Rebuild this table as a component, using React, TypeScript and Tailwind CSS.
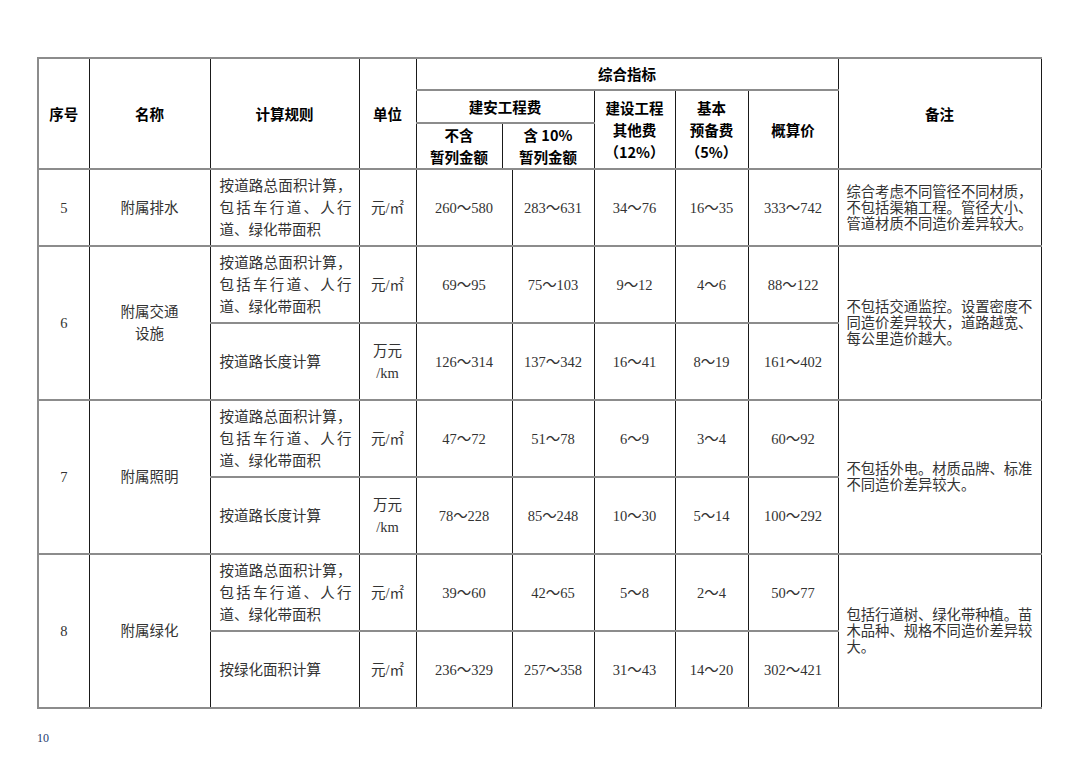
import React from "react";

const hb = "border-y-2 border-y-[#8c8c8c] border-x border-x-[#1a1a1a]";
const th = `${hb} text-center align-middle font-bold text-black p-0 leading-[22px]`;
const td = `${hb} text-center align-middle p-0 text-[#333] leading-[22px]`;

function Unit({ kind }: { kind: "m2" | "km" }) {
  if (kind === "m2") return <span>元/㎡</span>;
  return (
    <span>
      万元
      <br />/km
    </span>
  );
}

function RuleArea() {
  return (
    <div className="pl-[9px] pr-[7px] text-left">
      <div className="[text-align-last:justify] whitespace-nowrap">按道路总面积计算，</div>
      <div className="[text-align-last:justify] whitespace-nowrap">包括车行道、人行</div>
      <div className="whitespace-nowrap">道、绿化带面积</div>
    </div>
  );
}

function Remark({ lines }: { lines: string[] }) {
  return (
    <div className="pl-[8px] pr-[4px] text-left text-[14.3px] leading-[16px]">
      {lines.map((l, i) => (
        <div key={i} className="whitespace-nowrap">
          {l}
        </div>
      ))}
    </div>
  );
}

type Vals = [string, string, string, string, string];

function Nums({ v }: { v: Vals }) {
  return (
    <>
      <td className={td} colSpan={2}>
        {v[0]}
      </td>
      <td className={td}>{v[1]}</td>
      <td className={td}>{v[2]}</td>
      <td className={td}>{v[3]}</td>
      <td className={td}>{v[4]}</td>
    </>
  );
}

export default function App() {
  const groups: {
    no: string;
    name: React.ReactNode;
    remark: string[];
    rows: { rule: React.ReactNode; unit: "m2" | "km"; v: Vals }[];
  }[] = [
    {
      no: "6",
      name: (
        <>
          附属交通
          <br />
          设施
        </>
      ),
      remark: ["不包括交通监控。设置密度不", "同造价差异较大，道路越宽、", "每公里造价越大。"],
      rows: [
        { rule: <RuleArea />, unit: "m2", v: ["69～95", "75～103", "9～12", "4～6", "88～122"] },
        {
          rule: <div className="pl-[9px] text-left">按道路长度计算</div>,
          unit: "km",
          v: ["126～314", "137～342", "16～41", "8～19", "161～402"],
        },
      ],
    },
    {
      no: "7",
      name: "附属照明",
      remark: ["不包括外电。材质品牌、标准", "不同造价差异较大。"],
      rows: [
        { rule: <RuleArea />, unit: "m2", v: ["47～72", "51～78", "6～9", "3～4", "60～92"] },
        {
          rule: <div className="pl-[9px] text-left">按道路长度计算</div>,
          unit: "km",
          v: ["78～228", "85～248", "10～30", "5～14", "100～292"],
        },
      ],
    },
    {
      no: "8",
      name: "附属绿化",
      remark: ["包括行道树、绿化带种植。苗", "木品种、规格不同造价差异较", "大。"],
      rows: [
        { rule: <RuleArea />, unit: "m2", v: ["39～60", "42～65", "5～8", "2～4", "50～77"] },
        {
          rule: <div className="pl-[9px] text-left">按绿化面积计算</div>,
          unit: "m2",
          v: ["236～329", "257～358", "31～43", "14～20", "302～421"],
        },
      ],
    },
  ];

  return (
    <div className="w-[1068px] h-[774px] bg-white pt-[57px] pl-[37px] font-['Liberation_Serif','Noto_Sans_CJK_SC',serif] text-[14.5px]">
      <table className="table-fixed border-collapse w-[1003px] border-l-2 border-l-[#8c8c8c]">
        <colgroup>
          <col className="w-[51px]" />
          <col className="w-[121px]" />
          <col className="w-[149px]" />
          <col className="w-[57px]" />
          <col className="w-[86px]" />
          <col className="w-[10px]" />
          <col className="w-[82px]" />
          <col className="w-[81px]" />
          <col className="w-[73px]" />
          <col className="w-[90px]" />
          <col className="w-[203px]" />
        </colgroup>
        <thead className="font-['Noto_Sans_CJK_SC',sans-serif] text-[14.5px]">
          <tr className="h-[32px]">
            <th className={th} rowSpan={3}>
              序号
            </th>
            <th className={th} rowSpan={3}>
              名称
            </th>
            <th className={th} rowSpan={3}>
              计算规则
            </th>
            <th className={th} rowSpan={3}>
              单位
            </th>
            <th className={th} colSpan={6}>
              综合指标
            </th>
            <th className={th} rowSpan={3}>
              备注
            </th>
          </tr>
          <tr className="h-[33px]">
            <th className={th} colSpan={3}>
              建安工程费
            </th>
            <th className={th} rowSpan={2}>
              建设工程
              <br />
              其他费
              <br />
              （12%）
            </th>
            <th className={th} rowSpan={2}>
              基本
              <br />
              预备费
              <br />
              （5%）
            </th>
            <th className={th} rowSpan={2}>
              概算价
            </th>
          </tr>
          <tr className="h-[42px]">
            <th className={th}>
              不含
              <br />
              暂列金额
            </th>
            <th className={th} colSpan={2}>
              含 10%
              <br />
              暂列金额
            </th>
          </tr>
        </thead>
        <tbody>
          <tr className="h-[77px]">
            <td className={td}>5</td>
            <td className={td}>附属排水</td>
            <td className={td}>
              <RuleArea />
            </td>
            <td className={td}>
              <Unit kind="m2" />
            </td>
            <Nums v={["260～580", "283～631", "34～76", "16～35", "333～742"]} />
            <td className={td}>
              <Remark lines={["综合考虑不同管径不同材质，", "不包括渠箱工程。管径大小、", "管道材质不同造价差异较大。"]} />
            </td>
          </tr>
          {groups.map((g) =>
            g.rows.map((r, i) => (
              <tr className="h-[77px]" key={g.no + i}>
                {i === 0 && (
                  <>
                    <td className={td} rowSpan={2}>
                      {g.no}
                    </td>
                    <td className={td} rowSpan={2}>
                      {g.name}
                    </td>
                  </>
                )}
                <td className={td}>{r.rule}</td>
                <td className={td}>
                  <Unit kind={r.unit} />
                </td>
                <Nums v={r.v} />
                {i === 0 && (
                  <td className={td} rowSpan={2}>
                    <Remark lines={g.remark} />
                  </td>
                )}
              </tr>
            ))
          )}
        </tbody>
      </table>
      <div className="mt-[20px] text-[12px] text-[#1f3a6e] font-['Liberation_Serif',serif]">10</div>
    </div>
  );
}
